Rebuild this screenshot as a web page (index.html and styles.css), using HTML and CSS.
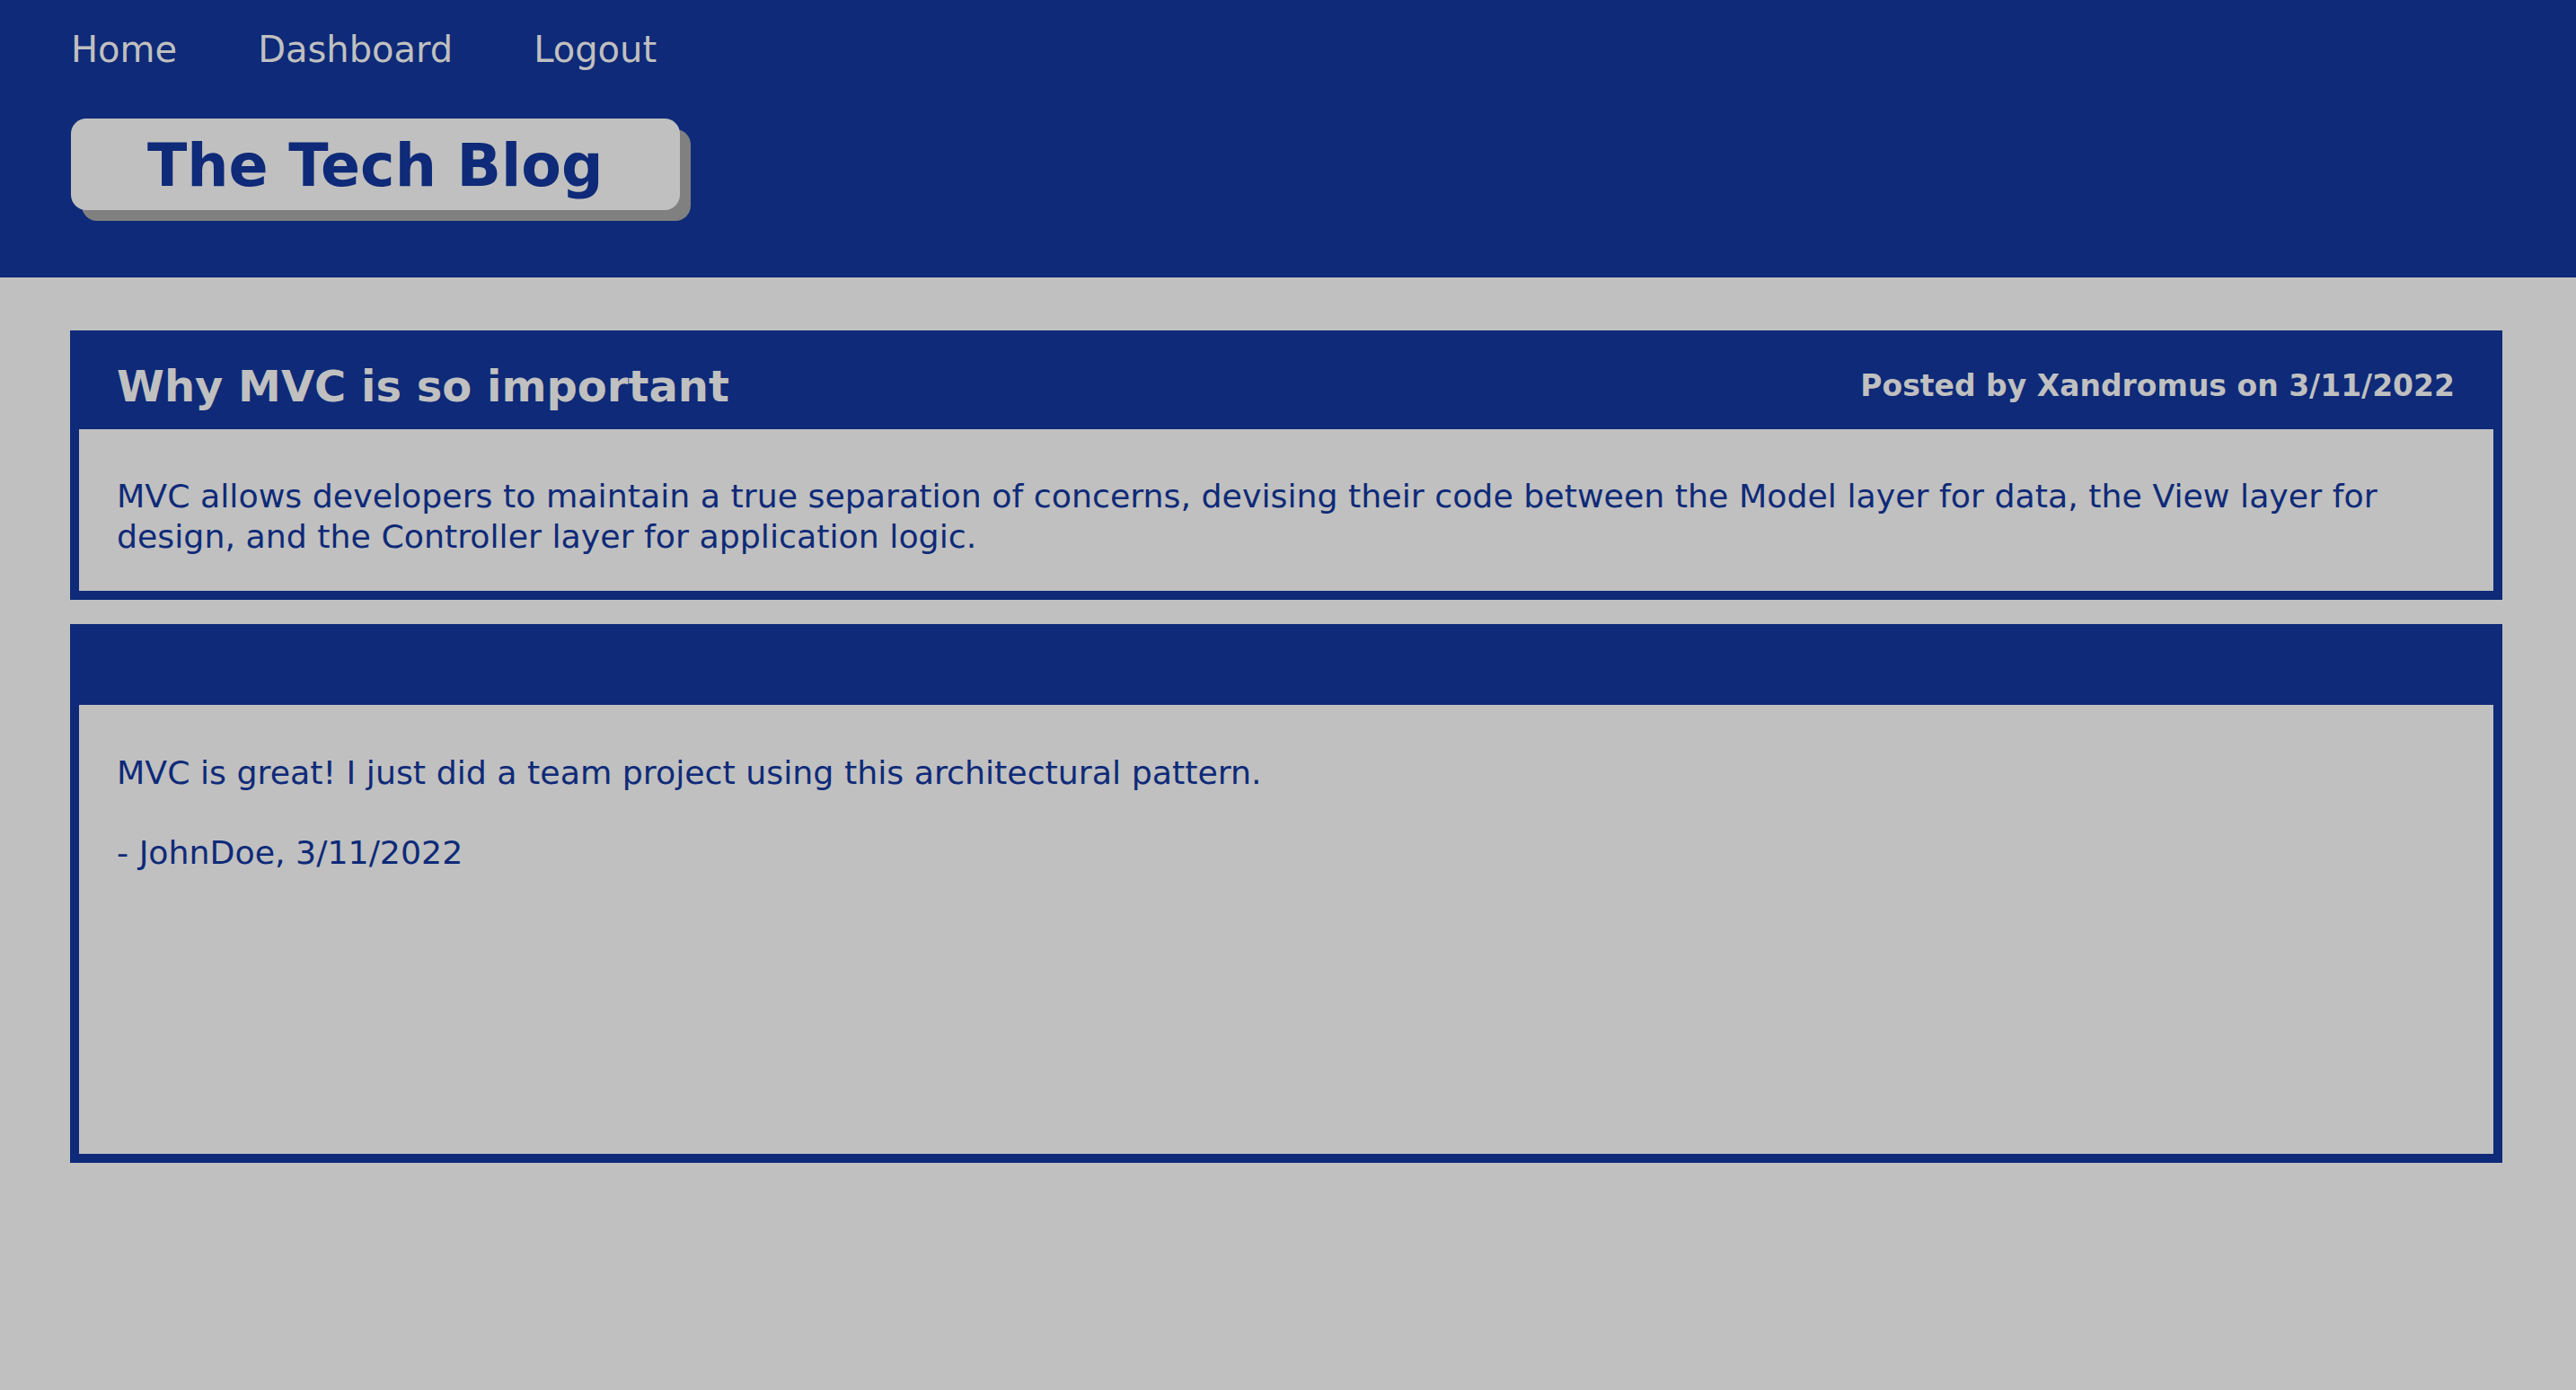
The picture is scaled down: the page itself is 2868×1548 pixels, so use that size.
FILE: index.html
```html
<!DOCTYPE html>
<html lang="en">
<head>
<meta charset="utf-8">
<title>The Tech Blog</title>
<link rel="stylesheet" href="styles.css">
</head>
<body>
<header class="site-header">
  <nav class="nav">
    <a class="nav-link" href="#">Home</a>
    <a class="nav-link" href="#">Dashboard</a>
    <a class="nav-link" href="#">Logout</a>
  </nav>
  <h1 class="brand">The Tech Blog</h1>
</header>
<main class="main">
  <article class="card">
    <div class="card-head">
      <h2 class="card-title">Why MVC is so important</h2>
      <span class="card-meta">Posted by Xandromus on 3/11/2022</span>
    </div>
    <div class="card-body">
      <p class="text">MVC allows developers to maintain a true separation of concerns, devising their code between the Model layer for data, the View layer for design, and the Controller layer for application logic.</p>
    </div>
  </article>
  <article class="card">
    <div class="card-head"></div>
    <div class="card-body comments">
      <p class="text comment">MVC is great! I just did a team project using this architectural pattern.</p>
      <p class="text">- JohnDoe, 3/11/2022</p>
    </div>
  </article>
</main>
</body>
</html>
```
FILE: styles.css
```css
html, body {
  margin: 0;
  padding: 0;
}
body {
  background: #c0c0c0;
  font-family: "DejaVu Sans", Verdana, sans-serif;
  color: #0e2a78;
}
.site-header {
  background: #0e2a78;
  padding: 32px 78px 75px 79px;
  display: flex;
  flex-direction: column;
  align-items: flex-start;
}
.nav {
  display: flex;
  gap: 90px;
}
.nav-link {
  color: #c0c0c0;
  text-decoration: none;
  font-size: 40px;
  line-height: 46.6px;
}
.brand {
  margin: 53px 0 0 0;
  background: #c0c0c0;
  color: #0e2a78;
  font-size: 65px;
  font-weight: bold;
  line-height: 74px;
  padding: 16px 85px 12px 85px;
  border-radius: 17px;
  box-shadow: 12px 12px 0 #808080;
}
.main {
  margin: 0 82px 0 78px;
  padding-top: 59px;
  display: flex;
  flex-direction: column;
  gap: 27px;
}
.card {
  background: #0e2a78;
  padding: 0 10px 10px 10px;
}
.card-head {
  min-height: 90px;
  box-sizing: border-box;
  padding: 34px 43px 20px 42px;
  display: flex;
  align-items: center;
  justify-content: space-between;
}
.card-title {
  margin: 0;
  color: #c0c0c0;
  font-size: 48px;
  font-weight: bold;
  line-height: 56px;
}
.card-meta {
  color: #c0c0c0;
  font-size: 33px;
  font-weight: bold;
  line-height: 38px;
}
.card-body {
  background: #c0c0c0;
  padding: 52px 42px 38px 42px;
}
.comments {
  padding-top: 53px;
  min-height: 500px;
  box-sizing: border-box;
}
.text {
  margin: 0;
  font-size: 36.3px;
  line-height: 45px;
  color: #0e2a78;
}
.comment {
  margin-bottom: 44px;
}
```
